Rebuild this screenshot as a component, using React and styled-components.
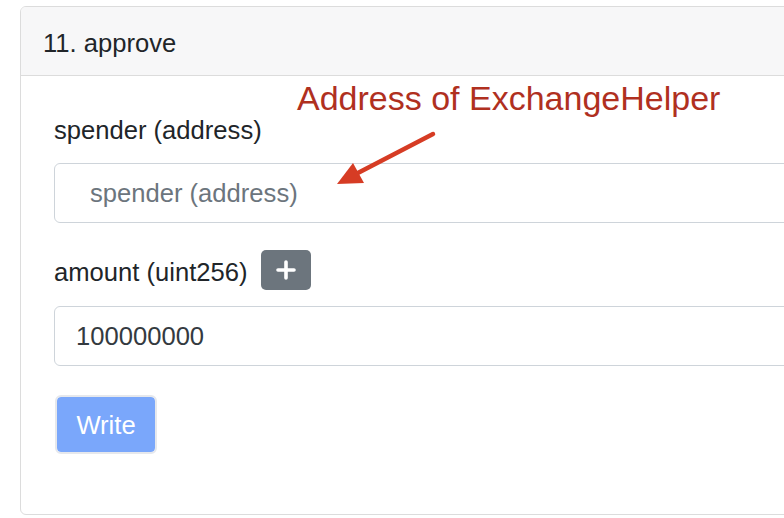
import React from 'react'
import styled, { createGlobalStyle } from 'styled-components'

const GlobalStyle = createGlobalStyle`
  html, body {
    margin: 0;
    padding: 0;
    background: #fff;
    overflow: hidden;
  }
  body {
    font-family: "Liberation Sans", Arial, Helvetica, sans-serif;
    color: #212529;
  }
`

const Page = styled.div`
  position: relative;
  width: 784px;
  height: 518px;
  overflow: hidden;
  padding: 6px 0 0 20px;
  box-sizing: border-box;
`

const Card = styled.div`
  width: 900px;
  height: 509px;
  border: 1px solid #dcdcdc;
  border-radius: 6px;
  box-sizing: border-box;
  display: flex;
  flex-direction: column;
  overflow: hidden;
`

const CardHeader = styled.div`
  background: #f7f7f8;
  border-bottom: 1px solid #dcdcdc;
  padding: 17px 22px 13px;
  font-size: 25.6px;
  line-height: 38.4px;
`

const CardBody = styled.div`
  padding: 35px 0 0 33px;
  display: flex;
  flex-direction: column;
`

const Label = styled.label`
  font-size: 25.6px;
  line-height: ${({ $shift = 0 }) => 38.4 - $shift}px;
  color: #212529;
  padding-top: ${({ $shift = 0 }) => $shift}px;
`

const LabelRow = styled.div`
  display: flex;
  align-items: center;
  gap: 13px;
  margin-top: ${({ $top }) => $top}px;
`

const Input = styled.input`
  box-sizing: border-box;
  width: 900px;
  height: 60px;
  margin-top: ${({ $top }) => $top}px;
  padding: 2px 0 0 ${({ $pad }) => $pad}px;
  border: 1.5px solid #ced4da;
  border-radius: 6px;
  font-family: inherit;
  font-size: 25.6px;
  color: #343a40;
  background: #fff;
  outline: none;

  &::placeholder {
    color: #6c757d;
  }
`

const IconButton = styled.button`
  width: 50px;
  height: 40px;
  border: none;
  border-radius: 5px;
  background: #6c757d;
  display: flex;
  align-items: center;
  justify-content: center;
  padding: 0;
`

const WriteButton = styled.button`
  align-self: flex-start;
  margin-top: 29px;
  margin-left: 1px;
  width: 102px;
  height: 59px;
  box-sizing: border-box;
  border: 2px solid #e6e8ec;
  border-radius: 6px;
  background: #7aa7fb;
  background-clip: padding-box;
  color: #fff;
  font-family: inherit;
  font-size: 25.6px;
  padding: 2px 0 0;
`

const Note = styled.div`
  position: absolute;
  left: 297px;
  top: 81px;
  font-size: 34px;
  line-height: 34px;
  color: #b0301f;
  white-space: nowrap;
`

const Arrow = styled.svg`
  position: absolute;
  left: 0;
  top: 0;
  pointer-events: none;
`

const Plus = () => (
  <svg width="20" height="20" viewBox="0 0 20 20">
    <path d="M10 2v16M2 10h16" stroke="#fff" strokeWidth="3.6" strokeLinecap="round" />
  </svg>
)

export default function App() {
  return (
    <>
      <GlobalStyle />
      <Page>
        <Card>
          <CardHeader>11. approve</CardHeader>
          <CardBody>
            <Label>spender (address)</Label>
            <Input $top={13} $pad={35} placeholder="spender (address)" readOnly />
            <LabelRow $top={27}>
              <Label $shift={4}>amount (uint256)</Label>
              <IconButton><Plus /></IconButton>
            </LabelRow>
            <Input $top={16} $pad={21} defaultValue="100000000" readOnly />
            <WriteButton>Write</WriteButton>
          </CardBody>
        </Card>
        <Note>Address of ExchangeHelper</Note>
        <Arrow width="784" height="518" viewBox="0 0 784 518">
          <line x1="433" y1="134" x2="354" y2="175" stroke="#d63c24" strokeWidth="4.5" strokeLinecap="round" />
          <polygon points="337,184 353,163 364,183" fill="#d63c24" />
        </Arrow>
      </Page>
    </>
  )
}
